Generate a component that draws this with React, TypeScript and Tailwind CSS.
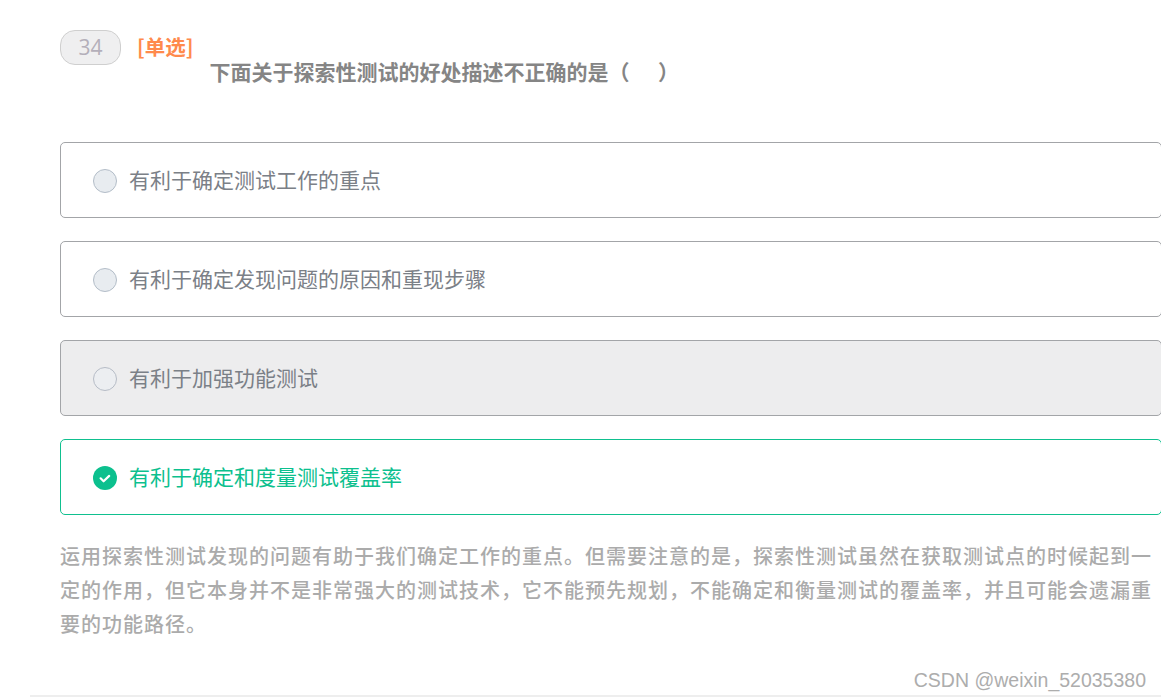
const cjk = "font-['Noto_Sans_CJK_SC','Liberation_Sans',sans-serif]";

type Opt = { text: string; state: "idle" | "hover" | "correct" };

const options: Opt[] = [
  { text: "有利于确定测试工作的重点", state: "idle" },
  { text: "有利于确定发现问题的原因和重现步骤", state: "idle" },
  { text: "有利于加强功能测试", state: "hover" },
  { text: "有利于确定和度量测试覆盖率", state: "correct" },
];

function Option({ text, state }: Opt) {
  const box =
    state === "correct"
      ? "border-[#0fc08f] bg-white text-[#0cc08e]"
      : state === "hover"
        ? "border-[#a3a5a8] bg-[#ededee] text-[#7b8087]"
        : "border-[#a3a5a8] bg-white text-[#7b8087]";
  return (
    <div className={`flex h-[76px] w-[1102px] items-center rounded-[5px] border pl-[32px] ${box}`}>
      {state === "correct" ? (
        <svg width="24" height="24" viewBox="0 0 24 24" className="mt-[2px] shrink-0">
          <circle cx="12" cy="12" r="12" fill="#0cc08e" />
          <path d="M7.6 12.3l3 3 5.6-5.4" fill="none" stroke="#fff" strokeWidth="2.2" strokeLinecap="round" strokeLinejoin="round" />
        </svg>
      ) : (
        <span
          className={`mt-[2px] h-[24px] w-[24px] shrink-0 rounded-full border ${
            state === "hover" ? "border-[#b6bcc6] bg-[#eceef1]" : "border-[#b3bdc8] bg-[#e8ecf0]"
          }`}
        />
      )}
      <span className={`ml-[12px] -translate-y-[1px] text-[21px] leading-none ${cjk}`}>{text}</span>
    </div>
  );
}

export default function App() {
  return (
    <div className="h-[699px] w-[1161px] overflow-hidden bg-white">
      <div className="pl-[60px] pt-[30px]">
        <div className="flex items-start">
          <div className="flex h-[35px] w-[61px] items-center justify-center rounded-[15px] border border-[#cfcfcf] bg-[#efeff0] font-['Open_Sans',sans-serif] text-[21px] text-[#b4afba]">
            34
          </div>
          <div className={`ml-[16px] mt-[2px] text-[20.5px] font-bold leading-[28px] text-[#ff8a4c] ${cjk}`}>[单选]</div>
          <div className={`ml-[16px] mt-[27px] whitespace-pre text-[21px] font-bold leading-[28px] text-[#858585] ${cjk}`}>
            下面关于探索性测试的好处描述不正确的是（&nbsp;&nbsp;&nbsp;&nbsp;&nbsp;&nbsp;）
          </div>
        </div>
        <div className="mt-[57px] flex flex-col gap-[23px]">
          {options.map((o) => (
            <Option key={o.text} {...o} />
          ))}
        </div>
        <p className={`mt-[24px] w-[1096px] text-[20px] font-medium leading-[34px] tracking-[1px] text-[#ababab] ${cjk}`}>
          运用探索性测试发现的问题有助于我们确定工作的重点。但需要注意的是，探索性测试虽然在获取测试点的时候起到一定的作用，但它本身并不是非常强大的测试技术，它不能预先规划，不能确定和衡量测试的覆盖率，并且可能会遗漏重要的功能路径。
        </p>
      </div>
      <div className="mt-[27px] pr-[15px] text-right font-['Liberation_Sans',sans-serif] text-[19.5px] leading-[24px] text-[#adadad]">
        CSDN @weixin_52035380
      </div>
      <div className="ml-[30px] mt-[3px] h-[2px] bg-[#eeeeee]" />
    </div>
  );
}
